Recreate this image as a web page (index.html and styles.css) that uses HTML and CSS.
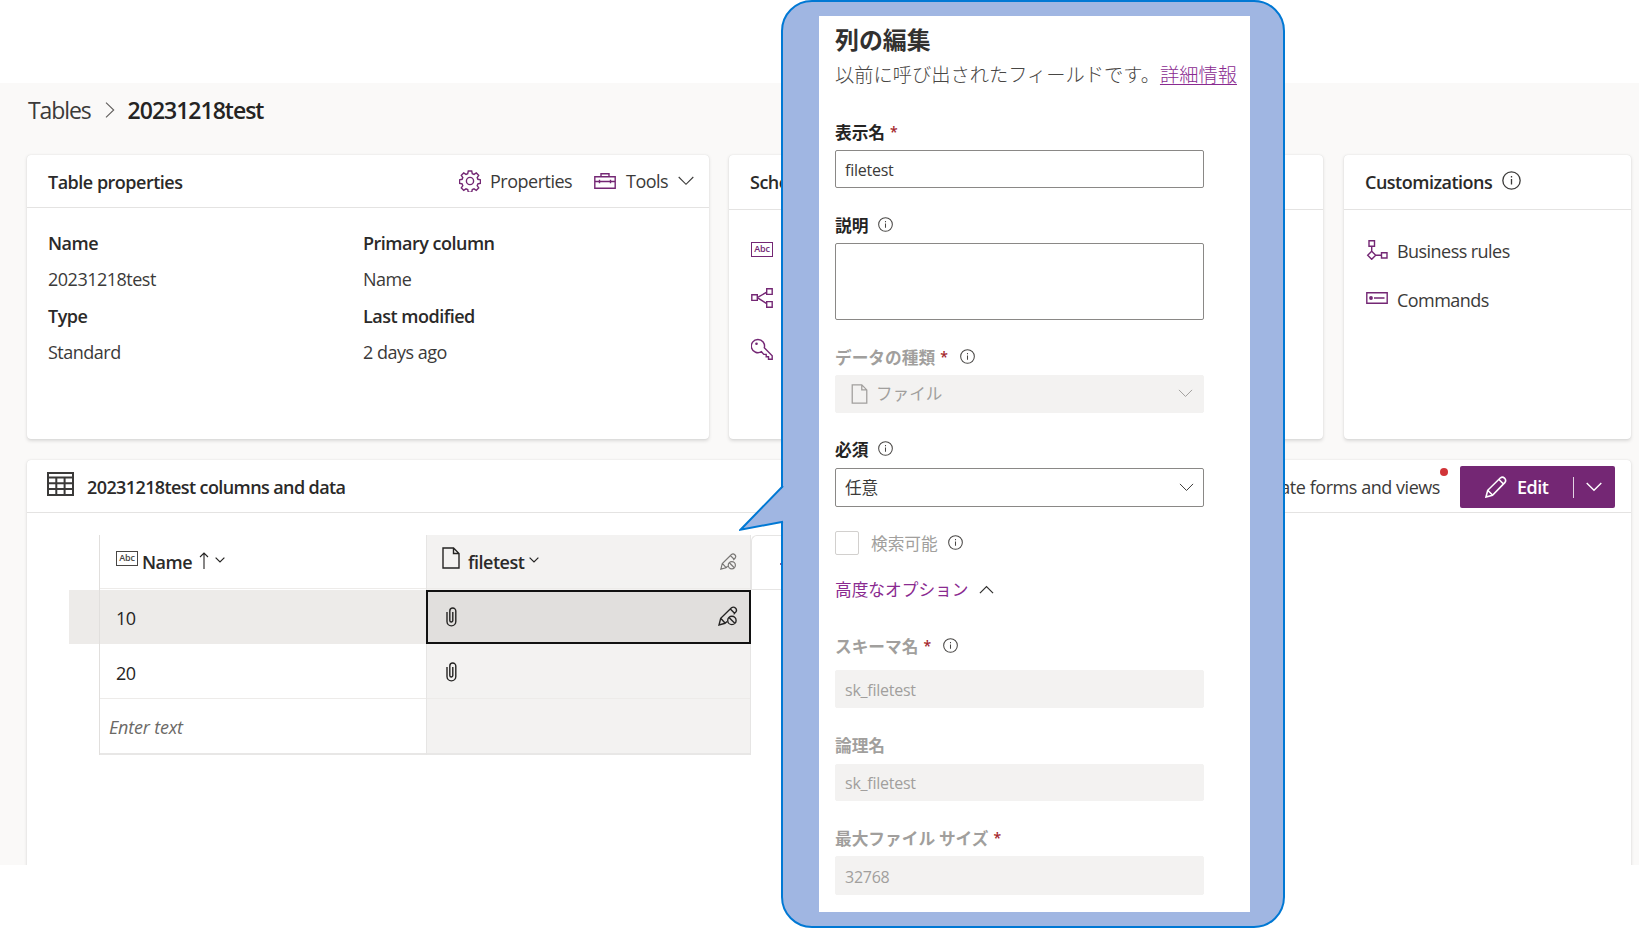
FILE: index.html
```html
<!DOCTYPE html>
<html lang="ja">
<head>
<meta charset="utf-8">
<title>20231218test</title>
<link rel="stylesheet" href="styles.css">
</head>
<body>
<svg class="defs" width="0" height="0">
  <symbol id="info" viewBox="0 0 16 16"><circle cx="8" cy="8" r="7.3"/><path d="M8 6.8v4.6M8 4.2v1.3"/></symbol>
  <symbol id="down" viewBox="0 0 16 10"><path d="M.7 1L8 8.3 15.3 1"/></symbol>
  <symbol id="doc" viewBox="0 0 18 22"><path d="M1 1h10.500l5.500 5.500V21H1zM11.500 1v5.500H17"/></symbol>
  <symbol id="noedit" viewBox="0 0 20 20"><path d="M7.200 17.300L1 19l1.700-6.700L13.500 1.800q2-1.500 3.900.3t.5 3.800L15.600 8.200M2.700 12.300l4.500 5M7.200 17.300L9 15.500M12.300 3l4.300 4.300"/><circle cx="13.900" cy="14.400" r="4.200"/><path d="M11 11.500l5.800 5.800"/></symbol>
  <symbol id="clip" viewBox="0 0 11 20"><path d="M1 5v9.500a4.400 4.400 0 0 0 8.800 0V4a3 3 0 0 0-6 0v9.500a1.500 1.500 0 0 0 3 0V5"/></symbol>
</svg>
<div class="app">
  <nav class="crumbs">
    <span class="crumb">Tables</span>
    <svg class="crumb-sep" viewBox="0 0 10 16"><path d="M1 .7L8.700 8 1 15.300"/></svg>
    <span class="crumb current">20231218test</span>
  </nav>
  <div class="cards">
    <section class="card props">
      <header class="card-head">
        <h2>Table properties</h2>
        <div class="tools">
          <svg class="gear" viewBox="0 0 22 22"><path d="M9.300 1h3.400l.6 2.700 1.700.7 2.300-1.500 2.400 2.400-1.500 2.300.7 1.700 2.600.6v3.400l-2.600.6-.7 1.700 1.500 2.300-2.400 2.400-2.300-1.500-1.700.7-.6 2.600H9.300l-.6-2.600-1.700-.7-2.300 1.500-2.400-2.400 1.500-2.300-.7-1.700-2.600-.6V9.900l2.600-.6.7-1.700-1.500-2.300 2.400-2.400L7 4.400l1.700-.7z"/><circle cx="11" cy="11" r="3.600"/></svg>
          <span class="tool-a">Properties</span>
          <svg class="box" viewBox="0 0 22 16"><path d="M.8 3.800h20.400v11.400H.8zM7 3.800V.8h8v3M.8 8.500h20.400M5.500 6.700v3.600M16.500 6.700v3.600"/></svg>
          <span class="tool-b">Tools</span>
          <svg class="tool-down"><use href="#down"/></svg>
        </div>
      </header>
      <dl class="facts">
        <div><dt>Name</dt><dd>20231218test</dd><dt>Type</dt><dd>Standard</dd></div>
        <div><dt>Primary column</dt><dd>Name</dd><dt>Last modified</dt><dd>2 days ago</dd></div>
      </dl>
    </section>
    <section class="card schema">
      <header class="card-head tall"><h2>Schema</h2></header>
      <div class="schema-list">
        <span class="abc">Abc</span>
        <svg class="share" viewBox="0 0 22 20"><path d="M.8 6.800h5.500v5.600H.8zM15.700.8h5.500v5.600h-5.500zM15.700 13.600h5.500v5.600h-5.500zM6.300 9.600l9.400-5.400M6.300 9.600l9.400 6"/></svg>
        <svg class="key" viewBox="0 0 22 22"><path d="M13.300 9.800l7.900 7.900v3.500h-3.700v-2.400h-2.300v-2.400h-2.400l-2.400-2.700a6.600 6.600 0 1 1 2.900-3.900z"/><circle class="solid" cx="5.500" cy="5.700" r="1.300"/></svg>
      </div>
    </section>
    <section class="card custom">
      <header class="card-head tall"><h2>Customizations</h2><svg class="info-lg"><use href="#info"/></svg></header>
      <div class="custom-list">
        <div class="row"><svg class="rules" viewBox="0 0 22 20"><path d="M3 .8h5.500v5.400H3zM15.500 12.800h5.500v5.200h-5.500zM5.700 11.300l4 4-4 4-4-4zM5.700 6.200v5.100M9.700 15.300h5.800"/></svg><span>Business rules</span></div>
        <div class="row"><svg class="cmds" viewBox="0 0 22 12"><path d="M.8.800h20.400v10.400H.8zM8 6h10.500"/><circle class="solid" cx="5" cy="6" r="1.900"/></svg><span>Commands</span></div>
      </div>
    </section>
  </div>
  <section class="card data">
    <header class="data-head">
      <svg class="grid-icon" viewBox="0 0 27 24"><path d="M1 1h25v22H1zM1 5.500h25M1 11.300h25M1 17.100h25M9.300 5.500V23M17.600 5.500V23"/></svg>
      <h2>20231218test columns and data</h2>
      <span class="update">Update forms and views<i class="dot"></i></span>
      <button class="edit">
        <svg class="pen" viewBox="0 0 22 22"><path d="M1 21l1.700-6.700L15.500 1.800q2-1.500 4 .4t.5 4.200L7.500 19.200zM2.700 14.300l5 5M14 3.500l4.700 4.700"/></svg>
        <span>Edit</span><i class="bar"></i><svg class="edit-down"><use href="#down"/></svg>
      </button>
    </header>
    <div class="grid">
      <div class="gutter"><div class="gutter-hit"></div></div>
      <div class="col name">
        <div class="cell th"><span class="abc">Abc</span><b>Name</b><svg class="sort" viewBox="0 0 10 17"><path d="M5 17V1M1 5l4-4 4 4"/></svg><svg class="mini"><use href="#down"/></svg></div>
        <div class="cell hit">10</div>
        <div class="cell second">20</div>
        <div class="cell enter">Enter text</div>
      </div>
      <div class="col file">
        <div class="cell th"><svg class="doc"><use href="#doc"/></svg><b>filetest</b><svg class="mini"><use href="#down"/></svg><svg class="noedit small"><use href="#noedit"/></svg></div>
        <div class="cell selected"><svg class="clip"><use href="#clip"/></svg><svg class="noedit"><use href="#noedit"/></svg></div>
        <div class="cell second"><svg class="clip"><use href="#clip"/></svg></div>
        <div class="cell"></div>
      </div>
      <div class="next"><svg class="plus" viewBox="0 0 16 16"><path d="M0 8h16M8 0v16"/></svg></div>
    </div>
  </section>
</div>

<aside class="callout">
  <svg class="tail" viewBox="0 0 46 48"><path class="fill" d="M46 1L2 45.500 46 37.500z"/><path d="M44 2L1.500 45.700 44 37.800"/></svg>
  <div class="panel">
    <h1>列の編集</h1>
    <p>以前に呼び出されたフィールドです。<a>詳細情報</a></p>
    <div class="group g1"><label>表示名<em>*</em></label><div class="input">filetest</div></div>
    <div class="group g2"><label>説明<svg class="info"><use href="#info"/></svg></label><div class="input"></div></div>
    <div class="group g3"><label class="off">データの種類<em>*</em><svg class="info"><use href="#info"/></svg></label><div class="input off jp"><svg class="doc"><use href="#doc"/></svg><span>ファイル</span><svg class="drop"><use href="#down"/></svg></div></div>
    <div class="group g4"><label>必須<svg class="info"><use href="#info"/></svg></label><div class="input jp"><span>任意</span><svg class="drop"><use href="#down"/></svg></div></div>
    <div class="check"><i></i><span>検索可能</span><svg class="info"><use href="#info"/></svg></div>
    <div class="adv"><span>高度なオプション</span><svg class="up"><use href="#down"/></svg></div>
    <div class="group g5"><label class="off">スキーマ名<em>*</em><svg class="info"><use href="#info"/></svg></label><div class="input off">sk_filetest</div></div>
    <div class="group g6"><label class="off">論理名</label><div class="input off">sk_filetest</div></div>
    <div class="group g7"><label class="off">最大ファイル サイズ<em>*</em></label><div class="input off">32768</div></div>
  </div>
</aside>
</body>
</html>
```
FILE: styles.css
```css
* { box-sizing: border-box; }
body {
  margin: 0;
  width: 1639px;
  height: 928px;
  overflow: hidden;
  position: relative;
  background: #fff;
  color: #3b3a39;
  font: 18px/24px "Open Sans", "Noto Sans CJK JP", sans-serif;
  letter-spacing: -0.5px;
}
h1, h2, p, dl, dd { margin: 0; }
svg { flex: none; fill: none; stroke: currentColor; stroke-width: 1.4; }
.defs { position: absolute; }
.solid { fill: currentColor; stroke: none; }
h2, dt, b { font-size: 18px; font-weight: 600; color: #2b2a29; white-space: nowrap; }

.app {
  margin-top: 83px;
  height: 782px;
  padding: 0 8px 0 27px;
  background: #faf9f8;
  overflow: hidden;
}
.crumbs { display: flex; align-items: center; height: 72px; padding-bottom: 18px; font-size: 23px; }
.crumb { letter-spacing: -1.1px; margin-left: 1px; }
.crumb-sep { width: 10px; height: 16px; margin: 0 12px 0 14px; stroke-width: 1.1; color: #605e5c; }
.crumb.current { font-weight: 600; color: #252423; letter-spacing: -1px; }

.card { background: #fff; border-radius: 4px; box-shadow: 0 1.600px 3.600px rgba(0,0,0,.13), 0 0 1px rgba(0,0,0,.12); }
.cards { display: flex; height: 284px; }
.props { width: 682px; }
.schema { width: 594px; margin-left: 20px; }
.custom { width: 287px; margin-left: 21px; }
.card-head { display: flex; align-items: center; height: 53px; padding: 0 15px 0 21px; border-bottom: 1px solid #e4e3e2; }
.card-head h2 { padding-top: 2px; }
.card-head.tall { height: 55px; padding-left: 21px; }
.card-head.tall h2 { padding-top: 0; }
.tools { display: flex; align-items: center; margin-left: auto; }
.gear, .box, .schema-list, .rules, .cmds { color: #742774; }
.gear { width: 22px; height: 22px; margin-right: 9px; }
.box { width: 22px; height: 16px; margin: 0 10px 0 0; }
.tool-a { width: 104px; }
.tool-b { width: 52px; }
.tool-down { width: 16px; height: 10px; stroke-width: 1.1; }
.facts { display: grid; grid-template-columns: 315px 1fr; padding: 17px 0 0 21px; line-height: 36.500px; }
.facts dd { position: relative; top: -0.5px; }
.schema-list { display: flex; flex-direction: column; align-items: flex-start; padding: 32px 0 0 22px; }
.abc {
  width: 22px; height: 15px; border: 1.500px solid; text-align: center;
  font: 600 9px/12px "Open Sans", sans-serif; letter-spacing: -0.1px;
}
.share { width: 22px; height: 20px; margin: 31px 0 30px; }
.key { width: 22px; height: 22px; }
.info-lg { width: 19px; height: 19px; margin: 0 0 3px 10px; stroke-width: 1.1; }
.custom-list { padding: 29px 0 0 22px; }
.row { display: flex; align-items: center; height: 24px; margin-bottom: 25px; letter-spacing: -0.55px; }
.rules { width: 22px; height: 20px; margin: 0 9px 2px 0; }
.cmds { width: 22px; height: 12px; margin: 0 9px 5px 0; }

.data { height: 420px; margin-top: 21px; }
.data-head { display: flex; align-items: center; height: 53px; padding: 2px 16px 0 20px; border-bottom: 1px solid #e4e3e2; }
.data-head h2 { letter-spacing: -0.6px; }
.grid-icon { width: 27px; height: 24px; margin: 0 13px 7px 0; stroke-width: 2; }
.update { position: relative; margin: 0 20px 0 auto; letter-spacing: -0.45px; }
.dot { position: absolute; right: -8px; top: -7px; width: 8px; height: 8px; border-radius: 50%; background: #d13438; }
.edit {
  display: flex; align-items: center; width: 155px; height: 42px; padding: 0 0 0 25px;
  border: 0; border-radius: 2px; background: #742774; color: #fff;
  font: 600 18px/24px "Open Sans", sans-serif; letter-spacing: -0.5px;
}
.pen { width: 22px; height: 22px; margin-right: 10px; stroke-width: 1.6; }
.bar { width: 1px; height: 21px; margin: 0 12px 0 auto; background: #e3d4e3; }
.edit-down { width: 16px; height: 10px; margin-right: 13px; }

.grid { display: flex; padding: 22px 0 0 42px; }
.gutter { width: 30px; padding-top: 55px; }
.gutter-hit { height: 54px; background: #edebe9; }
.cell { display: flex; align-items: center; height: 55px; padding: 2px 0 0 16px; border-bottom: 1px solid #edebe9; color: #252423; }
.cell.th { height: 54px; margin-bottom: 1px; padding-top: 0; }
.name { width: 327px; border-left: 1px solid #e1dfdd; }
.name .cell:last-child, .file .cell:last-child { height: 56px; border-bottom: 2px solid #e8e7e6; }
.cell.hit { background: #edebe9; height: 54px; }
.cell.second { padding-top: 4px; }
.th .abc { margin-bottom: 7px; color: #484644; }
.th b { margin-left: 4px; padding-top: 0; }
.sort { width: 10px; height: 17px; margin: 0 0 2px 7px; stroke-width: 1.1; }
.mini { width: 10px; height: 6px; margin: 0 0 4px 6px; stroke-width: 2; }
.cell.enter { padding-left: 9px; font-style: italic; color: #6b6966; letter-spacing: -0.2px; }
.file { width: 325px; background: #f3f2f1; border-right: 1px solid #e6e5e4; border-left: 1px solid #e6e5e4; }
.file .cell { padding-left: 15px; }
.th .doc { width: 18px; height: 22px; margin-bottom: 7px; }
.th .doc + b { margin-left: 8px; }
.file .th .mini { margin-left: 5px; }
.noedit { width: 20px; height: 20px; margin: 0 11px 5px auto; }
.noedit.small { width: 17px; height: 17px; margin: 0 13px 0 auto; color: #797775; }
.clip { width: 11px; height: 20px; margin: 0 0 3px 4px; }
.file .selected { height: 54px; margin: 0 -1px; border: 2px solid #111; background: #e1dfdd; }
.selected .clip { margin-left: 3px; }
.next { width: 60px; height: 55px; padding: 20px 0 0 28px; border: solid #e6e5e4; border-width: 1px 0 1px 1px; border-radius: 6px 0 0 0; color: #742774; }
.plus { display: block; width: 16px; height: 16px; }

.callout {
  position: absolute; left: 781px; top: 0; width: 504px; height: 928px;
  padding: 14px 33px 14px 36px;
  border: 2px solid #0078d4; border-radius: 31px; background: #a0b6e2;
}
.tail { position: absolute; left: -44px; top: 482px; width: 46px; height: 48px; stroke: #0078d4; stroke-width: 2; }
.tail .fill { fill: #a0b6e2; stroke: none; }
.panel { height: 896px; width: 431px; padding: 7px 0 0 16px; background: #fff; font-family: "Noto Sans CJK JP", sans-serif; letter-spacing: 0; font-size: 16.700px; }
.panel h1 { font-size: 23.900px; line-height: 32px; font-weight: 700; color: #323130; }
.panel p { margin-top: 4px; font-size: 19.250px; line-height: 30px; font-weight: 300; white-space: nowrap; color: #484644; }
.panel a { color: #8a2a90; text-decoration: underline; text-underline-offset: 2px; }
.group { margin-top: 24px; }
.group.g1 { margin-top: 31px; }
.group.g5 { margin-top: 32px; }
.group.g6, .group.g7 { margin-top: 25px; }
.panel label { display: flex; align-items: center; height: 24px; padding-top: 1px; margin-bottom: 7px; font-weight: 700; color: #252423; }
.panel em { margin-left: 5px; font: 600 14px/24px "Open Sans", sans-serif; color: #a4262c; }
.info { width: 15px; height: 15px; margin: 0 0 1px 10px; stroke-width: 1.100; color: #484644; }
em + .info { margin-left: 12px; }
.panel label.off { color: #a19f9d; }
.input {
  display: flex; align-items: center; width: 369px; height: 38px; padding: 2px 10px 0 9px;
  border: 1px solid #8a8886; border-radius: 2px;
  font-family: "Open Sans", sans-serif; font-size: 16px; letter-spacing: -0.25px;
}
.input.jp { padding-top: 0; font-family: "Noto Sans CJK JP", sans-serif; font-size: 16.600px; letter-spacing: 0; }
.input.jp span { margin-top: -2px; }
.input.off { background: #f3f2f1; border-color: #f3f2f1; color: #a19f9d; }
.input .doc { width: 17px; height: 20px; margin: 0 8px 0 6px; }
.drop, .up { width: 15px; height: 9px; stroke-width: 1.100; }
.drop { margin: 0 0 1px auto; }
.g1 label, .g7 label { margin-bottom: 6px; }
.g1 label, .g4 label, .g6 label, .g7 label { padding: 0 0 1px; }
.g2 .input { height: 77px; }
.g4 .input, .g7 .input { height: 39px; }
.g4 .input { padding-right: 9px; }
.g5 label { margin-bottom: 13px; }
.g6 .input { height: 37px; padding-top: 0; }
.check { display: flex; align-items: center; height: 24px; margin-top: 24px; color: #a19f9d; }
.check i { width: 24px; height: 24px; margin-right: 12px; border: 1px solid #d2d0ce; border-radius: 2px; }
.adv { display: flex; align-items: center; height: 24px; margin-top: 22px; color: #8a2a90; }
.up { margin-left: 10px; transform: scaleY(-1); color: #323130; stroke-width: 1.4; }
```
